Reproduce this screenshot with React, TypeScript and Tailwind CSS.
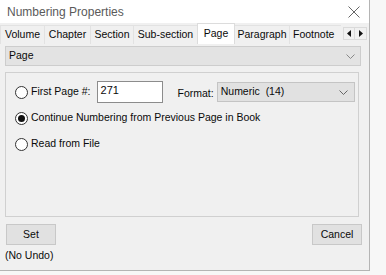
import React from "react";

function Radio({ checked }: { checked?: boolean }) {
  return (
    <span className="w-[13px] h-[13px] rounded-full border border-[#333] bg-white flex items-center justify-center shrink-0">
      {checked && <span className="w-[7px] h-[7px] rounded-full bg-[#111]" />}
    </span>
  );
}

function Chevron({ color = "#666" }: { color?: string }) {
  return (
    <svg width="9" height="5" viewBox="0 0 9 5">
      <path d="M0.5 0.5 L4.5 4.5 L8.5 0.5" fill="none" stroke={color} strokeWidth="1" />
    </svg>
  );
}

const tabs: { label: string; w: string }[] = [
  { label: "Volume", w: "w-[44px]" },
  { label: "Chapter", w: "w-[46px]" },
  { label: "Section", w: "w-[43px]" },
  { label: "Sub-section", w: "w-[64px]" },
];

export default function App() {
  return (
    <div className="w-[386px] h-[275px] bg-[#f7f7f7] overflow-hidden font-['Liberation_Sans',Arial,sans-serif] text-[10.5px] text-[#0a0a0a]">
      <div className="w-[370px] h-[271px] bg-[#f0f0f0] border-r border-b border-[#b4b4b4] flex flex-col">
        {/* Title bar */}
        <div className="h-[23px] bg-white flex items-center justify-between pl-[7px] pr-[9px]">
          <span className="text-[12px] text-[#5a5a5a] leading-none">Numbering Properties</span>
          <svg width="12" height="12" viewBox="0 0 12 12">
            <path d="M0.5 0.5 L11.5 11.5 M11.5 0.5 L0.5 11.5" stroke="#666" strokeWidth="1" />
          </svg>
        </div>
        {/* Tabs */}
        <div className="h-[21px] flex items-end relative">
          <div className="flex items-end overflow-hidden w-[341px]">
            {tabs.map((t) => (
              <div
                key={t.label}
                className={`${t.w} h-[19px] shrink-0 flex items-center justify-center border-t border-l border-[#e2e2e2] bg-[#f0f0f0]`}
              >
                {t.label}
              </div>
            ))}
            <div className="w-[38px] h-[21px] shrink-0 flex items-center justify-center bg-white border-t border-l border-r border-[#dcdcdc]">
              Page
            </div>
            <div className="w-[54px] h-[19px] shrink-0 flex items-center justify-center border-t border-[#e2e2e2] bg-[#f0f0f0]">
              Paragraph
            </div>
            <div className="w-[54px] h-[19px] shrink-0 flex items-center pl-[3px] border-t border-l border-[#e2e2e2] bg-[#f0f0f0]">
              Footnote
            </div>
          </div>
          <div className="flex mb-[4px] ml-[2px]">
            <div className="w-[12px] h-[13px] border border-[#dadada] bg-[#f0f0f0] flex items-center justify-center">
              <svg width="4" height="7" viewBox="0 0 4 7">
                <path d="M4 0 L0 3.5 L4 7 Z" fill="#111" />
              </svg>
            </div>
            <div className="w-[12px] h-[13px] border border-l-0 border-[#dadada] bg-[#f0f0f0] flex items-center justify-center">
              <svg width="4" height="7" viewBox="0 0 4 7">
                <path d="M0 0 L4 3.5 L0 7 Z" fill="#111" />
              </svg>
            </div>
          </div>
        </div>
        {/* Page dropdown */}
        <div className="ml-[5px] mt-[2px] w-[356px] h-[20px] bg-[#e3e3e3] border border-[#cdcdcd] flex items-center justify-between pl-[3px] pr-[5px]">
          <span>Page</span>
          <Chevron color="#888" />
        </div>
        {/* Group box */}
        <div className="ml-[5px] mt-[6px] w-[354px] h-[145px] border border-[#d0d0d0] flex flex-col">
          <div className="mt-[8px] h-[22px] flex items-center">
            <div className="ml-[9px] flex items-center gap-[3px]">
              <Radio />
              <span>First Page #:</span>
            </div>
            <div className="ml-[6px] w-[66px] h-[22px] bg-white border border-[#8c8c8c] pl-[3px] pt-[3px] text-[11px] leading-none">
              271
            </div>
            <span className="ml-[15px] mt-[3px]">Format:</span>
            <div className="ml-[3px] w-[138px] h-[20px] bg-[#e1e1e1] border border-[#c4c4c4] flex items-center justify-between pl-[3px] pr-[6px]">
              <span className="whitespace-pre">Numeric  (14)</span>
              <Chevron color="#666" />
            </div>
          </div>
          <div className="mt-[5px] h-[20px] flex items-center ml-[9px] gap-[3px]">
            <Radio checked />
            <span>Continue Numbering from Previous Page in Book</span>
          </div>
          <div className="mt-[6px] h-[20px] flex items-center ml-[9px] gap-[3px]">
            <Radio />
            <span>Read from File</span>
          </div>
        </div>
        {/* Buttons */}
        <div className="mt-[7px] flex justify-between pl-[6px] pr-[7px]">
          <div className="w-[50px] h-[21px] bg-[#e1e1e1] border border-[#c8c8c8] flex items-center justify-center">
            Set
          </div>
          <div className="w-[50px] h-[21px] bg-[#e1e1e1] border border-[#c8c8c8] flex items-center justify-center">
            Cancel
          </div>
        </div>
        <div className="ml-[5px] mt-[3px]">(No Undo)</div>
      </div>
    </div>
  );
}
